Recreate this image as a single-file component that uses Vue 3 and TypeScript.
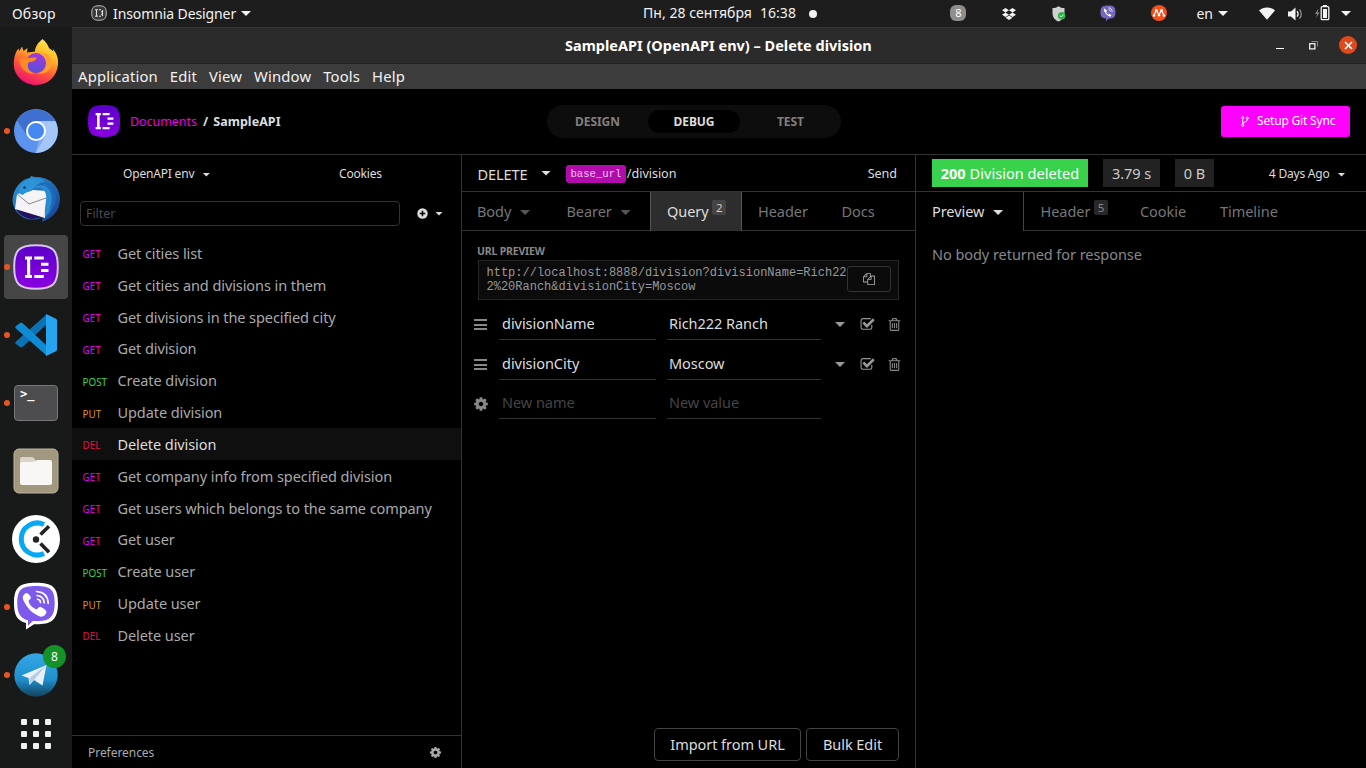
<script setup lang="ts">
interface RequestItem {
  method: 'GET' | 'POST' | 'PUT' | 'DEL'
  name: string
  active?: boolean
}

const menu: string[] = ['Application', 'Edit', 'View', 'Window', 'Tools', 'Help']

const requests: RequestItem[] = [
  { method: 'GET', name: 'Get cities list' },
  { method: 'GET', name: 'Get cities and divisions in them' },
  { method: 'GET', name: 'Get divisions in the specified city' },
  { method: 'GET', name: 'Get division' },
  { method: 'POST', name: 'Create division' },
  { method: 'PUT', name: 'Update division' },
  { method: 'DEL', name: 'Delete division', active: true },
  { method: 'GET', name: 'Get company info from specified division' },
  { method: 'GET', name: 'Get users which belongs to the same company' },
  { method: 'GET', name: 'Get user' },
  { method: 'POST', name: 'Create user' },
  { method: 'PUT', name: 'Update user' },
  { method: 'DEL', name: 'Delete user' },
]

const params = [
  { name: 'divisionName', value: 'Rich222 Ranch' },
  { name: 'divisionCity', value: 'Moscow' },
]

const cog =
  'M1152 896q0-106-75-181t-181-75-181 75-75 181 75 181 181 75 181-75 75-181zm512-109v222q0 12-8 23t-20 13l-185 28q-19 54-39 91 35 50 107 138 10 12 10 25t-9 23q-27 37-99 108t-94 71q-12 0-26-9l-138-108q-44 23-91 38-16 136-29 186-7 28-36 28h-222q-14 0-24.5-8.5t-11.5-21.5l-28-184q-49-16-90-37l-141 107q-10 9-25 9-14 0-25-11-126-114-165-168-7-10-7-23 0-12 8-23 15-21 51-66.5t54-70.5q-27-50-41-99l-183-27q-13-2-21-12.5t-8-23.5v-222q0-12 8-23t19-13l186-28q14-46 39-92-40-57-107-138-10-12-10-24 0-10 9-23 26-36 98.5-107.5t94.5-71.5q13 0 26 10l138 107q44-23 91-38 16-136 29-186 7-28 36-28h222q14 0 24.5 8.5t11.5 21.5l28 184q49 16 90 37l142-107q9-9 24-9 13 0 25 10 129 119 165 170 7 8 7 22 0 12-8 23-15 21-51 66.5t-54 70.5q26 50 41 98l183 28q13 2 21 12.5t8 23.5z'
const trash =
  'M704 736v576q0 14-9 23t-23 9h-64q-14 0-23-9t-9-23v-576q0-14 9-23t23-9h64q14 0 23 9t9 23zm256 0v576q0 14-9 23t-23 9h-64q-14 0-23-9t-9-23v-576q0-14 9-23t23-9h64q14 0 23 9t9 23zm256 0v576q0 14-9 23t-23 9h-64q-14 0-23-9t-9-23v-576q0-14 9-23t23-9h64q14 0 23 9t9 23zm128 724v-948h-896v948q0 22 7 40.5t14.5 27 10.5 8.5h832q3 0 10.5-8.5t14.5-27 7-40.5zm-672-1076h448l-48-117q-7-9-17-11h-317q-10 2-17 11zm928 32v64q0 14-9 23t-23 9h-96v948q0 83-47 143.5t-113 60.5h-832q-66 0-113-58.5t-47-141.5v-952h-96q-14 0-23-9t-9-23v-64q0-14 9-23t23-9h309l70-167q15-37 54-63t79-26h320q40 0 79 26t54 63l70 167h309q14 0 23 9t9 23z'
const checkSquare =
  'M1472 930v318q0 119-84.5 203.5t-203.5 84.5h-832q-119 0-203.5-84.5t-84.5-203.5v-832q0-119 84.5-203.5t203.5-84.5h832q63 0 117 25 15 7 18 23 3 17-9 29l-49 49q-10 10-23 10-3 0-9-2-23-6-45-6h-832q-66 0-113 47t-47 113v832q0 66 47 113t113 47h832q66 0 113-47t47-113v-254q0-13 9-22l64-64q10-10 23-10 6 0 12 3 20 8 20 29zm231-489l-814 814q-24 24-57 24t-57-24l-430-430q-24-24-24-57t24-57l110-110q24-24 57-24t57 24l263 263 647-647q24-24 57-24t57 24l110 110q24 24 24 57t-24 57z'
const files =
  'M1696 384q40 0 68 28t28 68v1216q0 40-28 68t-68 28h-960q-40 0-68-28t-28-68v-288h-544q-40 0-68-28t-28-68v-672q0-40 20-88t48-76l408-408q28-28 76-48t88-20h416q40 0 68 28t28 68v328q68-40 128-40h416zm-544 213l-299 299h299v-299zm-640-384l-299 299h299v-299zm196 647l316-316v-416h-384v416q0 40-28 68t-68 28h-416v640h512v-256q0-40 20-88t48-76zm956 804v-1152h-384v416q0 40-28 68t-68 28h-416v640h896z'
</script>

<template>
  <div class="desktop">
    <svg class="defs" width="0" height="0">
      <defs>
        <linearGradient id="insomnia" x1="0" y1="0" x2="0" y2="1">
          <stop offset="0" stop-color="#5a00c8" />
          <stop offset="1" stop-color="#8a00e0" />
        </linearGradient>
        <linearGradient id="ffBody" x1=".8" y1="0" x2=".35" y2="1">
          <stop offset="0" stop-color="#fff04a" />
          <stop offset=".35" stop-color="#ffb52a" />
          <stop offset=".65" stop-color="#ff5a38" />
          <stop offset="1" stop-color="#ee1170" />
        </linearGradient>
        <linearGradient id="ffGlobe" x1=".6" y1="0" x2=".4" y2="1">
          <stop offset="0" stop-color="#a338dc" />
          <stop offset="1" stop-color="#5550d8" />
        </linearGradient>
        <linearGradient id="tbBody" x1="0" y1="0" x2="1" y2="1">
          <stop offset="0" stop-color="#2a9ae0" />
          <stop offset="1" stop-color="#173c8c" />
        </linearGradient>
        <linearGradient id="tgBody" x1="0" y1="0" x2="0" y2="1">
          <stop offset="0" stop-color="#35a8e4" />
          <stop offset=".6" stop-color="#1f8fce" />
          <stop offset="1" stop-color="#14415c" />
        </linearGradient>
      </defs>
    </svg>

    <header class="topbar">
      <span class="overview">Обзор</span>
      <svg class="app-ico" width="16" height="16" viewBox="0 0 32 32">
        <path d="M16 1.500C27 1.500 30.500 5 30.500 16S27 30.500 16 30.500 1.500 27 1.500 16 5 1.500 16 1.500z" fill="#3a3a3a" stroke="#bdbdbd" stroke-width="2" />
        <path d="M8 9.500h6M8 22.500h6M11 9v14M16 9.500h4M16 22.500h4M20 13.500h4M20 18.500h4M23 10v12" stroke="#e0e0e0" stroke-width="2.200" fill="none" />
      </svg>
      <span class="app-name">Insomnia Designer</span>
      <i class="tri app-tri"></i>
      <div class="clock"><span>Пн, 28 сентября</span><span>16:38</span><i class="dot"></i></div>
      <div class="tray">
        <span class="tray-count">8</span>
        <svg class="dropbox" width="14" height="12" viewBox="0 0 14 12" fill="#f2f2f2">
          <path d="M3.500 0L7 2.200 3.500 4.400 0 2.200zM10.500 0L14 2.200 10.500 4.400 7 2.200zM3.500 4.500L7 6.700 3.500 8.900 0 6.700zM10.500 4.500L14 6.700 10.500 8.900 7 6.700zM7 7.500l3.500 2.200L7 12 3.500 9.700z" />
        </svg>
        <svg class="shield" width="14" height="16" viewBox="0 0 14 16">
          <path d="M6.500.3C8 1.700 10.500 2 12.500 2v5c0 4.500-2.500 7-6 8.500C3 14 .5 11.500.5 7V2c2 0 4.500-.3 6-1.700z" fill="#cfcfcf" />
          <circle cx="9.700" cy="9.700" r="3.800" fill="#2fb44a" /><path d="M8 9.700l1.300 1.300 2.200-2.400" fill="none" stroke="#fff" />
        </svg>
        <svg class="viber-s" width="16" height="16" viewBox="0 0 16 16">
          <path d="M8 .5c6 0 7.500 1.500 7.500 6.500s-1.500 6.500-6.500 6.600L6 16v-2.600C1.500 13 .5 11.500.5 7S2 .5 8 .5z" fill="#7469bd" />
          <path d="M4.600 3.500c-1 .6-.9 1.600 0 3.300 1.200 2.300 2.900 4 5.100 4.800.9.200 1.500-.7 1.700-1.400L9.500 8.700l-1 .8C7.300 9.100 6.500 8 6.200 6.900l.9-.8z" fill="#fff" />
          <path d="M8.500 2.800c2.200.1 3.600 1.500 3.700 3.900M8.600 4.600c1.200.1 1.800.8 1.900 2" fill="none" stroke="#fff" stroke-width=".8" />
        </svg>
        <svg class="meister" width="16" height="16" viewBox="0 0 16 16">
          <circle cx="8" cy="8" r="8" fill="#f2501e" />
          <path d="M3 10.500l2.300-5.300 2.700 4.800 2.400-4.800 2.600 5.300" fill="none" stroke="#fff" stroke-width="1.200" />
          <g fill="#fff"><circle cx="3" cy="10.500" r="1.200" /><circle cx="5.300" cy="5.200" r="1.200" /><circle cx="8" cy="10.300" r="1.200" /><circle cx="10.500" cy="5.200" r="1.200" /><circle cx="13" cy="10.500" r="1.200" /></g>
        </svg>
        <span class="lang">en</span>
        <i class="tri"></i>
        <svg class="wifi" width="16" height="13" viewBox="0 0 16 13"><path d="M0 3.500C4.500-.6 11.500-.6 16 3.500L8 12.800z" fill="#f2f2f2" /></svg>
        <svg class="sound" width="15" height="14" viewBox="0 0 15 14">
          <path d="M0 4.500h3L7.500.5v13L3 9.500H0z" fill="#f2f2f2" />
          <path d="M9 4.200c1.200 1.500 1.200 4 0 5.500" fill="none" stroke="#f2f2f2" stroke-width="1.300" />
          <path d="M11.500 2.300c2.300 2.600 2.300 6.800 0 9.400" fill="none" stroke="#999" stroke-width="1.200" />
        </svg>
        <svg class="battery" width="15" height="16" viewBox="0 0 15 16">
          <path d="M3.500 3.500L0 9h2.200L1 13l3.500-5.500H2.500z" fill="#8a8a8a" />
          <path d="M8 0h4v2H8z" fill="#f2f2f2" /><rect x="6.200" y="1.700" width="7.600" height="13" rx="1" fill="none" stroke="#f2f2f2" stroke-width="1.300" />
          <path d="M8 4h4v9H8z" fill="#f2f2f2" />
        </svg>
        <i class="tri last"></i>
      </div>
    </header>

    <aside class="dock">
      <div class="slot">
        <svg class="firefox" width="46" height="48" viewBox="0 0 46 48">
          <path d="M29.500 1c3.500 3 5.500 6 6.500 9l4.500 3.500-1-3c4.500 5 6 10 5.500 16C44 38.500 35 47 23 47S1 38 .8 26.500C.7 20 2.300 14 5.500 10.500l.8 2.500L9 8.500l1.500 4.500 4-3-.5 4.500 8-1C22 8 26 4 29.500 1z" fill="url(#ffBody)" />
          <circle cx="23" cy="25" r="10" fill="url(#ffGlobe)" />
          <path d="M6 21c6 0 11-2 18-1.500-1 3-4 4.500-8 4.500-3 4-.5 10 6 11.500C13 37 7 30 6 21z" fill="#ff8a25" />
          <path d="M26 14.500c6 1 9 6 7.500 11.500-.6 5-4 8.500-9 9.500 9 1.500 15-5 14.500-12-1-5.500-6-9.500-13-9z" fill="#ffa02c" />
        </svg>
      </div>
      <div class="slot running">
        <svg width="44" height="44" viewBox="0 0 44 44">
          <circle cx="22" cy="22" r="22" fill="#5c93ef" />
          <path d="M3 11.500A22 22 0 0 1 41.300 12H22L12.500 26z" fill="#3f70cf" />
          <path d="M22 12h19.300A22 22 0 0 1 21.500 44l9-16.500z" fill="#a5c6fa" />
          <path d="M31 27l-9.500 17L25 31z" fill="#7faaf3" />
          <circle cx="22" cy="22" r="10" fill="#fff" /><circle cx="22" cy="22" r="8" fill="#4688f1" />
        </svg>
      </div>
      <div class="slot">
        <svg width="48" height="48" viewBox="0 0 48 48">
          <path d="M.5 25C1 14 9 4 18 3l1-2 4 1c13-1 24 8 25 21 0 9-4 17-12 21l-6 3 1-5C14 50 1 38 .5 25z" fill="url(#tbBody)" />
          <path d="M3 32c3 7 9 11 17 12l11-2 2-5z" fill="#25105c" />
          <path d="M5 19l16-4 15 1-3 27L3 34z" fill="#f4f3f6" />
          <path d="M5 19l12 10 17-6" fill="none" stroke="#8a8790" />
          <path d="M7 15c2-6 6-9 11-12 5 0 11 0 15 3-5 1-8 3-11 7-3 5-8 3-11 7l-3-1z" fill="#2c93d6" />
          <path d="M22 14c4-5 12-6 18-4-2 2-5 3-6 6 5 10-1 15-1 27l6-6 4-9c3-9-2-17-8-20-6-1-9 1-13 6z" fill="#1d69b5" />
          <path d="M20 14c7-3 13 0 14 6 1 5-2 12-1 22l4-5 2-8c2-8 0-15-6-18-5-2-10 0-13 3z" fill="#2a8bd2" />
          <circle cx="12.500" cy="12.500" r="1.300" fill="#07366f" />
        </svg>
      </div>
      <div class="slot running focused">
        <svg width="46" height="46" viewBox="0 0 46 46">
          <path d="M23 1.200C40 1.200 44.800 6 44.800 23S40 44.800 23 44.800 1.200 40 1.200 23 6 1.200 23 1.200z" fill="url(#insomnia)" stroke="#d9c4ee" stroke-width="2" />
          <path d="M12 12.500h7v3h-1.800v15.500h1.800v3h-7v-3h2V15.500h-2zM21.300 12.500h9.500v3h-9.500zM28 18.700h7.500v3H28zM28 24.900h7.500v3H28zM21.300 31h9.500v3h-9.500z" fill="#fff" />
        </svg>
      </div>
      <div class="slot running">
        <svg width="44" height="44" viewBox="0 0 44 44">
          <path d="M2 31l4 3c1 .6 2 .4 3-.4L33 11V1L2 28.500c-1 .8-1 1.800 0 2.500z" fill="#0b72b5" />
          <path d="M2 13l4-3c1-.6 2-.4 3 .4L33 33v10L2 15.500c-1-.8-1-1.800 0-2.500z" fill="#0f8bd4" />
          <path d="M32 1l9.500 4.500c1 .5 1.500 1.200 1.500 2.200v28.600c0 1-.5 1.700-1.500 2.200L32 43z" fill="#25a5f0" />
        </svg>
      </div>
      <div class="slot running"><div class="terminal">&gt;_</div></div>
      <div class="slot">
        <svg width="46" height="46" viewBox="0 0 46 46">
          <rect x="1" y="1" width="44" height="44" rx="5" fill="#a1987f" stroke="#bbb39f" />
          <path d="M7 15V11q0-2 2-2h10q1.500 0 2.500 1.500L23 15z" fill="#dad5c8" />
          <path d="M7 16q0-2 2-2h11l4-2h13q2 0 2 2v21q0 2-2 2H9q-2 0-2-2z" fill="#f8f7f5" />
        </svg>
      </div>
      <div class="slot">
        <svg width="48" height="48" viewBox="0 0 48 48">
          <circle cx="24" cy="24" r="24" fill="#fff" />
          <path d="M32 9.500a16 16 0 1 0 0 29" fill="none" stroke="#04a8f4" stroke-width="5" />
          <path d="M28.500 19.500l8.500-8.300M28.500 28.500l8.500 8.700" stroke="#222" stroke-width="3.600" /><circle cx="24" cy="24.500" r="3.200" fill="#222" />
        </svg>
      </div>
      <div class="slot running">
        <svg class="viber" width="46" height="48" viewBox="0 0 46 48">
          <path d="M23 .8c16.500 0 22 4.200 22 20.700 0 14.500-5.500 20.500-19 20.700h-5L13 47.500V41C4 38.500 1 33 1 21.500 1 5 6.500.8 23 .8z" fill="#fff" />
          <path d="M23 4c14.500 0 18.700 3.500 18.700 17.500C41.700 34 37 38.700 26 39h-6.300L15 43.800v-5.500C7.500 36.500 4.300 31 4.300 21.500 4.300 7.500 8.500 4 23 4z" fill="#7d5aec" />
          <path d="M13 11c-3 2-4 4-2.500 7.500 3.800 8 9 13 16.500 16 3 1 6-1.500 6.500-4.500.1-1.500-4.500-4.500-6-5.200-1.800-.4-3 2.700-4.500 2.500-3.800-1.500-6.500-4.500-7.500-8 .3-1.700 2.700-1.700 2.300-4C17 13 14.500 10.300 13 11z" fill="#fff" />
          <path d="M23.500 9.500c7.500.5 11.500 5 11.700 12M24 13.500c4.700.5 7 3.200 7.200 7.500M24.500 17.300c2 .2 3 1.300 3 3.300" fill="none" stroke="#fff" stroke-width="1.600" stroke-linecap="round" />
        </svg>
      </div>
      <div class="slot running">
        <svg width="44" height="44" viewBox="0 0 44 44">
          <circle cx="22" cy="22" r="21.700" fill="url(#tgBody)" />
          <path d="M7.500 22.500L32.500 12l-4 20.500-8.500-5.500-4.500 5-1-7z" fill="#e9f1f8" /><path d="M32.500 12L15.500 25l0 7 4.500-5z" fill="#b6cde0" />
        </svg>
        <span class="count">8</span>
      </div>
      <div class="apps"><i v-for="n in 9" :key="n"></i></div>
    </aside>

    <main class="window">
      <div class="titlebar">
        <b>SampleAPI (OpenAPI env) – Delete division</b>
        <div class="controls">
          <i class="minimize"></i>
          <svg width="9" height="9" viewBox="0 0 9 9"><path d="M2.500.5h6v5" fill="none" stroke="#888" /><rect x=".7" y="2.700" width="5.200" height="5.200" fill="none" stroke="#fff" stroke-width="1.200" /></svg>
          <span class="close"><svg width="9" height="9" viewBox="0 0 9 9"><path d="M1 1l7 7M8 1L1 8" stroke="#fff" stroke-width="1.600" /></svg></span>
        </div>
      </div>
      <nav class="menubar"><span v-for="m in menu" :key="m">{{ m }}</span></nav>

      <div class="app-head">
        <svg width="32" height="32" viewBox="0 0 46 46">
          <path d="M23 0C41 0 46 5 46 23S41 46 23 46 0 41 0 23 5 0 23 0z" fill="url(#insomnia)" />
          <path d="M11 11.500h7.500v3.300h-1.800v17h1.800V35H11v-3.200h2v-17h-2zM21 11.500h10v3.300H21zM28 18h8.500v3.300H28zM28 25h8.500v3.300H28zM21 31.800h10V35H21z" fill="#fff" />
        </svg>
        <div class="crumbs"><span>Documents</span><b class="slash">/</b><b>SampleAPI</b></div>
        <div class="modes"><b>DESIGN</b><b class="on">DEBUG</b><b>TEST</b></div>
        <button class="git">
          <svg width="8" height="11" viewBox="0 0 8 11" fill="none" stroke="#fff" stroke-width="1"><circle cx="1.700" cy="1.700" r="1.100" /><circle cx="6.300" cy="2.200" r="1.100" /><circle cx="1.700" cy="9.200" r="1.100" /><path d="M1.700 3v5M6.300 3.500c0 3-4.500 2-4.500 4.500" /></svg>
          Setup Git Sync
        </button>
      </div>

      <div class="panes">
        <section class="sidebar">
          <div class="env"><span class="env-name">OpenAPI env <i class="tri s"></i></span><span class="cookies">Cookies</span></div>
          <div class="filter-row">
            <div class="filter">Filter</div>
            <svg width="11" height="11" viewBox="0 0 12 12"><circle cx="6" cy="6" r="5.700" fill="#ddd" /><path d="M6 3v6M3 6h6" stroke="#000" stroke-width="1.700" /></svg>
            <i class="tri s"></i>
          </div>
          <ul class="list">
            <li v-for="r in requests" :key="r.name" :class="{ active: r.active }">
              <span class="method" :class="r.method.toLowerCase()">{{ r.method }}</span><span>{{ r.name }}</span>
            </li>
          </ul>
          <div class="prefs"><span>Preferences</span><svg width="13" height="13" viewBox="0 0 1792 1792"><path :d="cog" fill="#aaa" /></svg></div>
        </section>

        <section class="request">
          <div class="urlbar">
            <span class="verb">DELETE</span><i class="tri"></i>
            <span class="tag">base_url</span><span class="path">/division</span><span class="send">Send</span>
          </div>
          <div class="tabs">
            <div class="tab t-body">Body <i class="tri dim"></i></div>
            <div class="tab t-bearer">Bearer <i class="tri dim"></i></div>
            <div class="tab t-query on">Query <sup>2</sup></div>
            <div class="tab t-header">Header</div>
            <div class="tab t-docs">Docs</div>
          </div>
          <div class="req-body">
            <b class="label">URL PREVIEW</b>
            <div class="preview">
              <code>http://localhost:8888/division?divisionName=Rich222%20Ranch&amp;divisionCity=Moscow</code>
              <span class="copy"><svg width="12" height="12" viewBox="0 0 1792 1792"><path :d="files" fill="#aaa" /></svg></span>
            </div>
            <div v-for="p in params" :key="p.name" class="param">
              <span class="grip"><i></i><i></i><i></i></span>
              <span class="field name">{{ p.name }}</span>
              <span class="field value">{{ p.value }}</span>
              <i class="tri mid"></i>
              <svg class="check" width="15" height="15" viewBox="0 0 1792 1792"><path :d="checkSquare" fill="#999" /></svg>
              <svg class="bin" width="15" height="15" viewBox="0 0 1792 1792"><path :d="trash" fill="#888" /></svg>
            </div>
            <div class="param new">
              <svg class="gear" width="16" height="16" viewBox="0 0 1792 1792"><path :d="cog" fill="#888" /></svg>
              <span class="field name">New name</span>
              <span class="field value">New value</span>
            </div>
          </div>
          <div class="req-foot"><button class="import">Import from URL</button><button class="bulk">Bulk Edit</button></div>
        </section>

        <section class="response">
          <div class="status">
            <span class="chip ok"><b>200</b> Division deleted</span>
            <span class="chip time">3.79 s</span>
            <span class="chip size">0 B</span>
            <span class="ago">4 Days Ago <i class="tri s"></i></span>
          </div>
          <div class="tabs">
            <div class="tab r-preview on">Preview <i class="tri"></i></div>
            <div class="tab r-header">Header <sup>5</sup></div>
            <div class="tab r-cookie">Cookie</div>
            <div class="tab r-timeline">Timeline</div>
          </div>
          <p class="empty">No body returned for response</p>
        </section>
      </div>
    </main>
  </div>
</template>

<style>
html,
body {
  background: #000;
  overflow: hidden;
}
</style>

<style scoped>
* { box-sizing: border-box; }
.desktop {
  width: 1366px;
  height: 768px;
  display: grid;
  grid-template: 27px 741px / 72px 1294px;
  background: #000;
  color: #ddd;
  font: 14.5px/20px "Noto Sans", "Open Sans", sans-serif;
  letter-spacing: -0.05px;
  white-space: nowrap;
  overflow: hidden;
}
.defs { position: absolute; }
svg { display: block; flex: none; }
button { font: inherit; letter-spacing: inherit; color: inherit; margin: 0; background: none; }
.tri {
  display: inline-block;
  flex: none;
  width: 10px;
  height: 5px;
  background: currentColor;
  clip-path: polygon(0 0, 100% 0, 50% 100%);
}
.tri.s { width: 8px; height: 4px; }

.topbar { grid-column: 1 / 3; display: flex; align-items: center; background: #1d1d1d; color: #f2f2f2; font-size: 14px; letter-spacing: 0; }
.overview { width: 79px; padding-left: 12px; letter-spacing: 0.2px; }
.app-ico { margin: -1px 6px 0 12px; }
.app-name { width: 130px; font-size: 14px; letter-spacing: -0.1px; }
.app-tri { margin-left: -2px; }
.clock { display: flex; align-items: center; width: 175px; margin-left: 392px; }
.clock span { margin-top: -1px; letter-spacing: 0.04px; }
.clock span + span { margin-left: 8px; }
.dot { width: 8px; height: 8px; margin-left: 13px; border-radius: 50%; background: #f2f2f2; }
.tray { display: flex; align-items: center; margin-left: auto; padding-right: 15px; }
.tray-count { width: 16px; height: 16px; margin: -2px 36px 0 0; border-radius: 6px; background: #8d8d8d; color: #fff; font-size: 11px; line-height: 16px; text-align: center; }
.dropbox { margin-right: 36px; }
.shield { margin-right: 34px; }
.viber-s { margin: -2px 35px 0 0; }
.meister { margin: -1px 29px 0 0; }
.lang { margin-right: 5px; }
.wifi { margin-left: 31px; }
.sound { margin-left: 13px; }
.battery { margin: -2px 11px 0 12px; }

.dock { display: flex; flex-direction: column; align-items: center; gap: 4px; padding-top: 4px; background: #181a1a; overflow: hidden; }
.slot { position: relative; flex: none; width: 64px; height: 64px; display: flex; align-items: center; justify-content: center; border-radius: 4px; }
.slot.focused { background: #464646; }
.slot.running::before { content: ""; position: absolute; left: 0; top: 29px; width: 6px; height: 6px; border-radius: 50%; background: #e95420; }
.firefox, .viber { margin-top: -2px; }
.terminal { width: 44px; height: 36px; padding-left: 5px; border: 1px solid #77777a; border-radius: 4px; background: #4d4d4f; color: #fff; font: bold 12px/16px "DejaVu Sans Mono", monospace; letter-spacing: 0; }
.count { position: absolute; right: 2px; top: 2px; width: 23px; height: 23px; border-radius: 50%; background: #149127; color: #fff; font-size: 12px; line-height: 23px; text-align: center; }
.apps { display: grid; grid-template-columns: repeat(3, 6px); gap: 6px; margin-top: 8px; }
.apps i { height: 6px; border-radius: 1px; background: #f0f0f0; }

.window { display: flex; flex-direction: column; min-width: 0; }
.titlebar { display: flex; align-items: center; height: 37px; flex: none; border-top: 1px solid #363636; border-bottom: 1px solid #222; background: #2b2b2b; color: #fff; }
.titlebar b { margin: -2px 0 0 493px; font-size: 14.500px; letter-spacing: 0; }
.controls { display: flex; align-items: center; margin-left: auto; padding-right: 9px; }
.minimize { width: 8px; height: 1px; margin: 5px 25px 0 0; background: #fff; }
.close { display: grid; place-items: center; width: 18px; height: 18px; margin: -1px 0 0 21px; border-radius: 50%; background: #e0491a; }
.menubar { display: flex; align-items: center; gap: 12px; height: 25px; flex: none; padding: 0 0 1px 6px; background: #3c3c3c; color: #f2f2f2; font-size: 14.800px; letter-spacing: 0.17px; }
.app-head { display: flex; align-items: center; height: 66px; flex: none; padding: 0 16px 1px; border-bottom: 1px solid #333; }
.crumbs { display: flex; width: 417px; padding: 2px 0 0 10px; font-size: 12.500px; }
.crumbs span { color: #e800e8; }
.crumbs b { font-size: 12.500px; letter-spacing: 0.05px; }
.crumbs .slash { margin: 0 5px 0 6px; color: #ddd; }
.modes { display: flex; align-items: center; width: 294px; height: 33px; margin-left: 10px; border-radius: 17px; background: #0d0d0d; color: #808080; font-size: 12px; text-align: center; }
.modes b { flex: 1; padding-top: 1px; }
.modes .on { flex: none; width: 92px; height: 23px; padding-top: 0; border-radius: 12px; background: #000; color: #ddd; line-height: 23px; }
.git { display: flex; align-items: center; gap: 8px; width: 129px; height: 31px; margin-left: auto; padding: 0 0 0 20px; border: 0; border-radius: 3px; background: #f0f; color: #fff; font-size: 12px; letter-spacing: -0.18px; }

.panes { display: grid; grid-template-columns: 390px 454px 1fr; flex: 1; min-height: 0; }
.sidebar, .request { display: flex; flex-direction: column; border-right: 1px solid #333; min-width: 0; }
.env { display: flex; align-items: center; height: 37px; font-size: 12px; letter-spacing: -0.18px; }
.env-name { width: 267px; padding-left: 51px; }
.env-name .tri, .ago .tri { margin-left: 5px; vertical-align: 1px; }
.filter-row { display: flex; align-items: center; height: 25px; margin: 9px 0 11px 8px; }
.filter { width: 320px; height: 25px; margin-right: 17px; padding-left: 5px; border: 1px solid #333; border-radius: 4px; color: #4a4a4a; font-size: 12.500px; line-height: 23px; }
.filter-row .tri { margin-left: 7px; }
.list { flex: 1; margin: 0; padding: 0; list-style: none; color: #aaa; letter-spacing: -0.08px; }
.list li { display: flex; align-items: center; height: 31.840px; }
.list li > span:last-child { margin-left: -0.5px; }
.list .active { background: #0f0f0f; color: #ddd; }
.method { width: 46px; padding: 3px 0 0 10.500px; font-size: 9.900px; letter-spacing: 0; }
.get { color: #e800e8; }
.post { color: #3ad64c; }
.put { color: #dc9712; }
.del { color: #e01346; }
.prefs { display: flex; align-items: center; justify-content: space-between; height: 33px; padding: 1px 19px 0 16px; border-top: 1px solid #333; color: #aaa; font-size: 12px; }

.urlbar { display: flex; align-items: center; height: 37px; flex: none; padding: 0 18px 0 15px; border-bottom: 1px solid #333; }
.verb { width: 64px; padding-left: 0.5px; padding-top: 1px; font-size: 14.500px; }
.tag { height: 18px; margin: 2px 1px 0 15px; padding: 0 4.500px; border-radius: 3px; background: #b10bab; color: #f0c8ee; font: 10.600px/18px "Liberation Mono", monospace; letter-spacing: 0; }
.path { padding-top: 1px; font-size: 12.600px; }
.send { margin-left: auto; padding-top: 1px; font-size: 12.600px; }
.tabs { display: flex; height: 39px; flex: none; border-bottom: 1px solid #333; color: #777; }
.tab { height: 39px; flex: none; line-height: 39px; }
.tab .tri { margin-left: 5px; vertical-align: 2px; }
.tri.dim { color: #555; }
sup { display: inline-block; width: 14px; height: 15px; border-radius: 2px; background: #444; color: #ccc; font-size: 11.500px; line-height: 15px; text-align: center; vertical-align: 5px; letter-spacing: 0; margin-left: 0; }
.t-body { width: 89px; padding-left: 15px; }
.t-bearer { width: 99px; padding-left: 15.500px; }
.t-query { width: 92px; padding-left: 16px; border: solid #555; border-width: 0 1px; background: #2d2d2d; color: #ddd; }
.t-header { width: 83px; padding-left: 16px; }
.t-docs { padding-left: 16.500px; }
.req-body { flex: 1; padding: 12px 15px 0 12px; }
.label { display: block; height: 17px; padding-left: 3px; color: #888; font-size: 10.500px; line-height: 17px; letter-spacing: -0.18px; }
.preview { display: flex; align-items: center; height: 40px; margin: 0 1px 5px 4px; padding: 0 7px 0 8px; border: 1px solid #262626; background: #0b0b0b; }
code { flex: none; width: 364px; margin: -1px -4px 0 -0.5px; color: #999; font: 12px/14px "Liberation Mono", monospace; letter-spacing: 0; white-space: normal; word-break: break-all; }
.copy { display: grid; flex: none; place-items: center; width: 44px; height: 26px; margin-top: -2px; border: 1px solid #333; border-radius: 3px; }
.param { display: flex; height: 40px; color: #ddd; letter-spacing: -0.04px; }
.grip { display: flex; flex: none; flex-direction: column; gap: 2px; width: 13px; padding-top: 14px; }
.grip i { height: 2px; margin-bottom: 0.5px; background: #888; }
.field { flex: none; height: 35px; padding-left: 3px; border-bottom: 1px solid #333; line-height: 36px; }
.field.name { width: 157px; margin: 0 11px 0 12px; }
.field.value { width: 154px; padding-left: 2px; }
.tri.mid { margin: 17px 14.500px 0 14px; color: #999; }
.check, .bin { margin-top: 12px; }
.bin { margin-left: 12px; }
.param.new { height: 39px; color: #444; }
.new .field { height: 34px; line-height: 34px; }
.gear { margin: 11px -1.500px 0 -1.500px; }
.req-foot { display: flex; justify-content: flex-end; gap: 5px; padding: 0 16px 7px 0; }
.req-foot button { height: 33px; padding: 0 0 1px; border: 1px solid #444; border-radius: 4px; }
.import { width: 147px; }
.bulk { width: 93px; }

.status { display: flex; align-items: center; gap: 15px; height: 37px; padding-left: 16px; border-bottom: 1px solid #333; }
.chip { height: 28px; background: #222; line-height: 28px; text-align: center; color: #ccc; }
.ok { width: 156px; background: #39d24d; color: #fff; letter-spacing: 0.05px; }
.time { width: 57px; }
.size { width: 39px; }
.ago { margin-left: auto; padding: 1px 20.500px 0 0; font-size: 12px; letter-spacing: -0.2px; }
.response .tab.on { width: 108px; padding-left: 16px; border-right: 1px solid #444; background: #000; color: #ddd; }
.r-header { width: 100px; padding-left: 16.500px; }
.r-header sup { background: #282828; color: #888; }
.r-cookie { width: 80px; padding-left: 16px; }
.r-timeline { padding-left: 16px; }
.empty { margin: 13px 0 0 16px; color: #888; }
</style>
